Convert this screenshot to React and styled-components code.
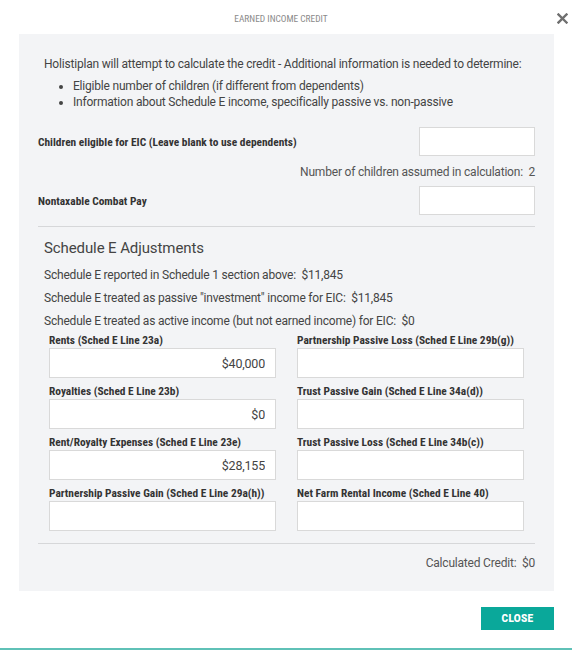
import styled, { createGlobalStyle } from "styled-components";

const GlobalStyle = createGlobalStyle`
  html, body {
    margin: 0;
    padding: 0;
    background: #ffffff;
  }
  body {
    font-family: Roboto, "Liberation Sans", sans-serif;
    color: #4a4a4a;
  }
  * {
    box-sizing: border-box;
  }
`;

const Modal = styled.div`
  width: 572px;
  height: 650px;
  display: flex;
  flex-direction: column;
  border-bottom: 2px solid #5fc1b7;
`;

const Header = styled.div`
  display: flex;
  align-items: center;
  height: 34px;
  padding-left: 19px;
`;

const Title = styled.div`
  flex: 1;
  text-align: center;
  font-family: "Liberation Sans Narrow", "Roboto Condensed", Roboto, sans-serif;
  font-size: 9.4px;
  color: #8a8a8a;
  text-transform: uppercase;
  padding-top: 3px;
`;

const CloseX = styled.button`
  width: 29px;
  display: flex;
  justify-content: flex-end;
  padding: 3px 4px 0 0;
  border: 0;
  background: none;
  cursor: pointer;
`;

const Panel = styled.div`
  margin: 0 18px 0 19px;
  height: 557px;
  background: #f3f4f6;
  padding: 22px 19px 0 19px;
  display: flex;
  flex-direction: column;
  font-size: 12px;
  letter-spacing: -0.2px;
`;

const Intro = styled.p`
  margin: 0 0 0 6px;
  line-height: 16px;
  color: #444;
`;

const Bullets = styled.ul`
  margin: 7px 0 0 6px;
  padding-left: 29px;
  line-height: 15.5px;
  color: #444;
`;

const InlineRow = styled.div`
  display: flex;
  align-items: center;
  justify-content: space-between;
  margin-top: ${(p) => p.$top}px;
`;

const BoldLabel = styled.label`
  font-family: "Liberation Sans Narrow", "Roboto Condensed", Roboto, sans-serif;
  font-weight: 700;
  font-size: 11.4px;
  letter-spacing: 0;
  color: #333;
`;

const Box = styled.input`
  width: ${(p) => p.$w || "100%"};
  height: ${(p) => p.$h || 30}px;
  border: 1px solid #d9d9d9;
  background: #fff;
  text-align: right;
  padding: 0 10px;
  font-family: Roboto, sans-serif;
  font-size: 12.5px;
  letter-spacing: -0.2px;
  color: #444;
  outline: none;
  display: block;
`;

const Note = styled.div`
  text-align: right;
  line-height: 16px;
  color: #555;
  margin-top: ${(p) => p.$top}px;
`;

const Divider = styled.hr`
  border: 0;
  border-top: 1px solid #d6d7d9;
  margin: ${(p) => p.$top}px 0 0 0;
`;

const Heading = styled.h3`
  margin: 12px 0 0 6px;
  font-weight: 400;
  font-size: 15px;
  letter-spacing: -0.1px;
  line-height: 18px;
  color: #444;
`;

const Summary = styled.div`
  margin: 7px 0 0 6px;
  line-height: 23px;
  color: #444;
`;

const Grid = styled.div`
  display: grid;
  grid-template-columns: 1fr 1fr;
  column-gap: 21px;
  row-gap: 6px;
  padding: 0 11px;
`;

const Field = styled.div`
  display: flex;
  flex-direction: column;
  ${BoldLabel} {
    line-height: 14px;
    margin-bottom: 1px;
  }
`;

const Footer = styled.div`
  display: flex;
  justify-content: flex-end;
  padding: 16px 18px 0 0;
`;

const CloseButton = styled.button`
  width: 73px;
  height: 23px;
  border: 0;
  background: #0aa89a;
  color: #fff;
  font-family: Roboto, "Liberation Sans", sans-serif;
  font-weight: 900;
  font-size: 10px;
  letter-spacing: 0.3px;
  cursor: pointer;
`;

const fields = [
  ["Rents (Sched E Line 23a)", "$40,000"],
  ["Partnership Passive Loss (Sched E Line 29b(g))", ""],
  ["Royalties (Sched E Line 23b)", "$0"],
  ["Trust Passive Gain (Sched E Line 34a(d))", ""],
  ["Rent/Royalty Expenses (Sched E Line 23e)", "$28,155"],
  ["Trust Passive Loss (Sched E Line 34b(c))", ""],
  ["Partnership Passive Gain (Sched E Line 29a(h))", ""],
  ["Net Farm Rental Income (Sched E Line 40)", ""],
];

const App = () => {
  return (
    <>
      <GlobalStyle />
      <Modal>
        <Header>
          <Title>Earned Income Credit</Title>
          <CloseX aria-label="close">
            <svg width="11" height="11" viewBox="0 0 11 11">
              <path d="M1.5 1.5 L9.5 9.5 M9.5 1.5 L1.5 9.5" stroke="#6f6f6f" strokeWidth="2.4" strokeLinecap="square" />
            </svg>
          </CloseX>
        </Header>
        <Panel>
          <Intro>
            Holistiplan will attempt to calculate the credit - Additional information is needed to determine:
          </Intro>
          <Bullets>
            <li>Eligible number of children (if different from dependents)</li>
            <li>Information about Schedule E income, specifically passive vs. non-passive</li>
          </Bullets>
          <InlineRow $top={17}>
            <BoldLabel>Children eligible for EIC (Leave blank to use dependents)</BoldLabel>
            <Box $w="116px" $h={29} defaultValue="" />
          </InlineRow>
          <Note $top={8}>Number of children assumed in calculation:&nbsp; 2</Note>
          <InlineRow $top={6}>
            <BoldLabel>Nontaxable Combat Pay</BoldLabel>
            <Box $w="116px" $h={29} defaultValue="" />
          </InlineRow>
          <Divider $top={11} />
          <Heading>Schedule E Adjustments</Heading>
          <Summary>
            <div>Schedule E reported in Schedule 1 section above:&nbsp; $11,845</div>
            <div>Schedule E treated as passive "investment" income for EIC:&nbsp; $11,845</div>
            <div>Schedule E treated as active income (but not earned income) for EIC:&nbsp; $0</div>
          </Summary>
          <Grid>
            {fields.map(([label, value]) => (
              <Field key={label}>
                <BoldLabel>{label}</BoldLabel>
                <Box defaultValue={value} />
              </Field>
            ))}
          </Grid>
          <Divider $top={12} />
          <Note $top={11}>Calculated Credit:&nbsp; $0</Note>
        </Panel>
        <Footer>
          <CloseButton>CLOSE</CloseButton>
        </Footer>
      </Modal>
    </>
  );
};

export default App;
